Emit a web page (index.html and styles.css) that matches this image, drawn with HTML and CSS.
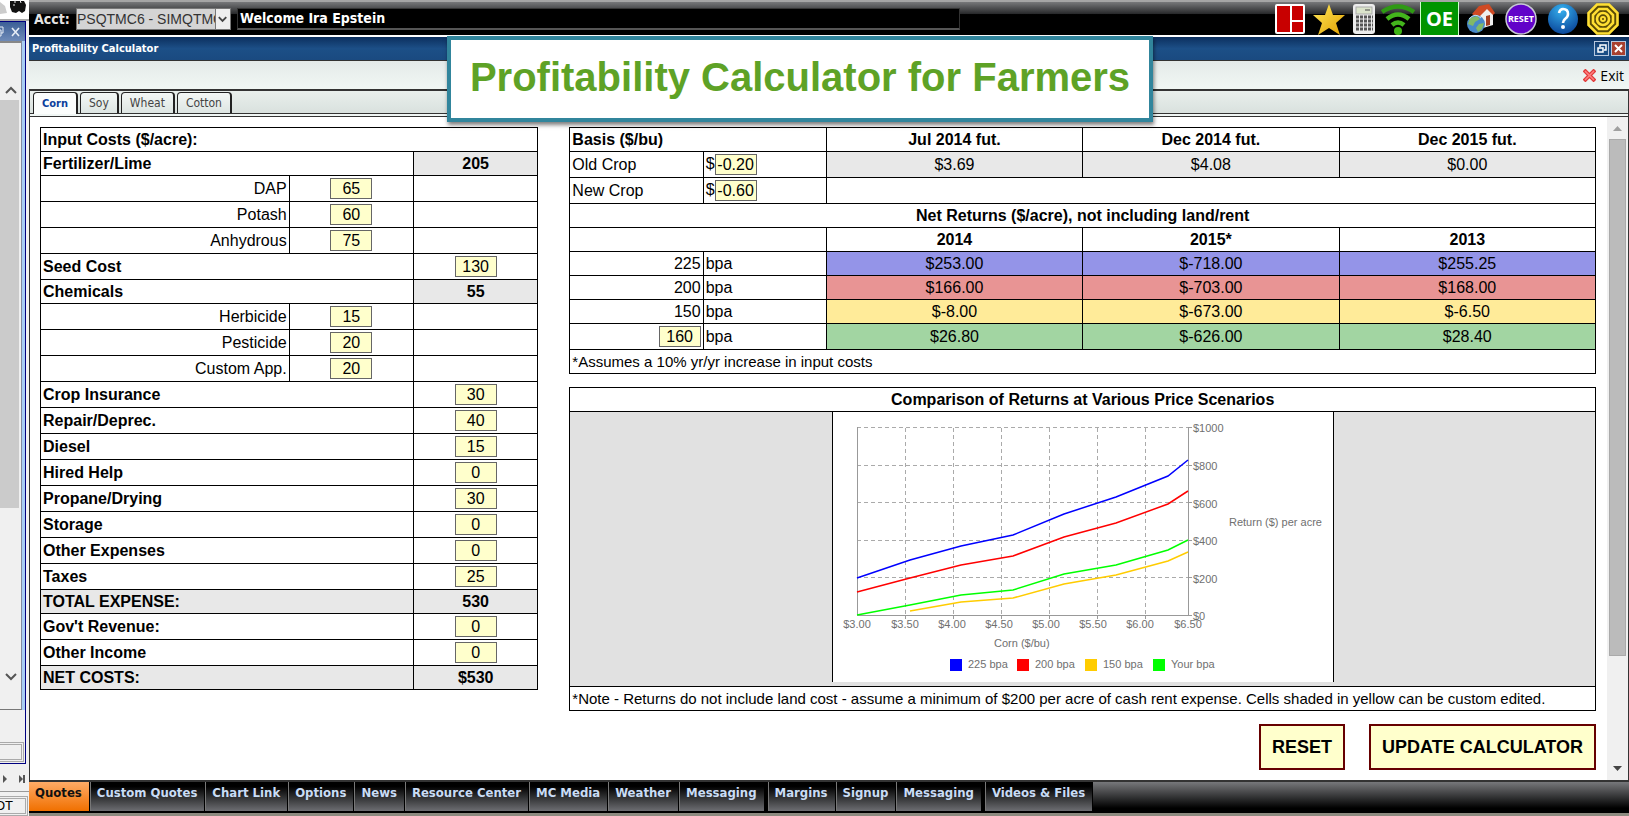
FILE: index.html
```
<!DOCTYPE html>
<html lang="en">
<head>
<meta charset="utf-8">
<title>Profitability Calculator</title>
<link rel="stylesheet" href="styles.css">
</head>
<body>
<div class="desktop">
  <aside class="side">
    <div class="side-top"><svg width="29" height="20" viewBox="0 0 29 20"><path d="M0 2l5 4 2 7-7 1z" fill="#ccc"/><path d="M10 1h14l2 4-1 6-3 2-3-2-3 2-4-1-2-5z" fill="#111"/><path d="M15 0v3M20 0l1 3M13 5h2" stroke="#eee"/></svg></div>
    <div class="side-window">
      <div class="side-title"><svg width="24" height="16" viewBox="0 0 24 16" fill="none" stroke="#e8eef6"><path d="M-4 6h5v6h-5M-2 6V3h5v6H1"/><path d="M12 4l7 8M19 4l-7 8" stroke-width="1.6"/></svg></div>
      <div class="side-scroll">
        <svg width="12" height="8" viewBox="0 0 12 8" fill="none" stroke="#555" stroke-width="2"><path d="M1 7l5-5 5 5"/></svg>
        <div class="side-thumb"></div>
        <svg width="12" height="8" viewBox="0 0 12 8" fill="none" stroke="#555" stroke-width="2"><path d="M1 1l5 5 5-5"/></svg>
      </div>
      <div class="side-field"></div>
    </div>
    <div class="side-pager"><svg width="26" height="8" viewBox="0 0 26 8" fill="#555"><path d="M3 0l4 4-4 4zM19 0l4 4-4 4zM23 0h2v8h-2z"/></svg></div>
    <div class="side-status">OT</div>
  </aside>

  <div class="app">
    <header class="topbar">
      <label class="acct" for="acct">Acct:</label>
      <span class="picker">
        <select id="acct"><option>PSQTMC6 - SIMQTMC6</option></select>
        <svg width="15" height="20" viewBox="0 0 15 20"><path d="M3 8l4 4 4-4" fill="none" stroke="#444" stroke-width="2"/></svg>
      </span>
      <div class="welcome">Welcome Ira Epstein</div>
      <div class="tools">
        <button class="tool" aria-label="Layout"><svg width="30" height="30" viewBox="0 0 30 30"><rect width="30" height="30" rx="2" fill="#fff"/><path d="M2 2h13v26H2zM17 2h11v14H17zM17 18h11v10H17z" fill="#c80000"/></svg></button>
        <button class="tool" aria-label="Favorites"><svg width="37" height="32" viewBox="-2 0 37 32"><defs><linearGradient id="gold" x2="1" y2="1"><stop offset="0" stop-color="#ffe95c"/><stop offset="1" stop-color="#e2a000"/></linearGradient></defs><path d="M17 1l4 11 12 0-9 8 4 12-11-7-11 7 4-12-9-8h12z" fill="url(#gold)"/></svg></button>
        <button class="tool" aria-label="Calculator"><svg width="24" height="30" viewBox="0 0 24 30"><rect x="1" width="22" height="30" rx="3" fill="#ececec"/><rect x="4" y="3" width="16" height="7" fill="#dbe4cb" stroke="#aaa"/><path d="M13 6h5" stroke="#444"/><path d="M4 13h17M4 17h17M4 21h17M4 25h17" stroke="#555" stroke-width="3" stroke-dasharray="3 1"/></svg></button>
        <button class="tool" aria-label="Connection"><svg width="34" height="32" viewBox="1 0 34 32" fill="none" stroke="#43b51c" stroke-width="4.500"><path d="M2 9q16-11 32 0" stroke="#2f9a14"/><path d="M7 16q11-9 22 0"/><path d="M12 22q6-5 12 0"/><circle cx="18" cy="28" r="4" fill="#3fb516" stroke="none"/></svg></button>
        <button class="tool oe">OE</button>
        <button class="tool roomy" aria-label="Home"><svg width="30" height="30" viewBox="0 0 30 30"><path d="M11 12l7-9 9 5v13l-10 3-6-4z" fill="#eee"/><path d="M6 10l7-8 10-2 6 9-2 2-6-6-9 9z" fill="#cf4a24"/><path d="M20 12l4-1v10l-4 1z" fill="#a63d20"/><circle cx="10" cy="20" r="9" fill="#4889c9"/><path d="M4 14l7-2 3 3-5 3-2 4-5-2zM13 20l5-1-2 6-4 3-2-4z" fill="#82b966"/><path d="M3 15q6-7 12-1" stroke="#c4e0f3" fill="none"/></svg></button>
        <button class="tool roomy" aria-label="Reset"><svg width="32" height="32" viewBox="0 0 32 32"><circle cx="16" cy="16" r="15" fill="#6203c9" stroke="#c9c9d6" stroke-width="1.5"/><text x="16" y="19" class="reset-glyph">RESET</text></svg></button>
        <button class="tool roomiest" aria-label="Help"><svg width="30" height="30" viewBox="0 0 30 30"><defs><radialGradient id="orb" cx=".45" cy=".2" r=".9"><stop offset="0" stop-color="#35b0ee"/><stop offset="1" stop-color="#063a90"/></radialGradient></defs><circle cx="15" cy="15" r="15" fill="url(#orb)"/><path d="M11 9q1-4 4-4 5 0 5 5 0 3-3 5-2 2-2 4" fill="none" stroke="#fff" stroke-width="2.6"/><circle cx="15" cy="23" r="2" fill="#fff"/></svg></button>
        <button class="tool" aria-label="Target"><svg width="32" height="32" viewBox="0 0 32 32" fill="none" stroke="#ffdf33" stroke-width="2.6"><path d="M10 1.500h12L30.500 10v12L22 30.500H10L1.500 22V10z" fill="#5a4b06"/><path d="M12 6h8l6 6v8l-6 6h-8l-6-6v-8z"/><circle cx="16" cy="16" r="6"/><circle cx="16" cy="16" r="2" stroke-width="2"/></svg></button>
      </div>
    </header>

    <div class="titlebar">
      <h2>Profitability Calculator</h2>
      <div class="winbtns">
        <button class="winbtn" aria-label="Restore"><svg width="13" height="13" viewBox="0 0 13 13" fill="none" stroke="#fff" stroke-width="1.500"><path d="M3 6h5v4H3zM5 5V3h6v5H9"/></svg></button>
        <button class="winbtn close" aria-label="Close"><svg width="13" height="13" viewBox="0 0 13 13" stroke="#fff" stroke-width="2"><path d="M3 3l7 7M10 3l-7 7"/></svg></button>
      </div>
    </div>
    <div class="toolbar">
      <button class="exit"><svg width="13" height="13" viewBox="0 0 13 13" stroke="#e23a3a" stroke-width="4"><path d="M1 1l11 11M12 1L1 12"/><path d="M2 2l9 9M11 2l-9 9" stroke="#ff8080" stroke-width="1.500"/></svg>Exit</button>
    </div>
    <nav class="tabs">
      <button class="tab on">Corn</button><button class="tab">Soy</button><button class="tab">Wheat</button><button class="tab">Cotton</button>
    </nav>

    <div class="body">
      <main class="content">
        <table class="grid costs">
          <colgroup><col class="w50"><col class="w25"><col class="w25"></colgroup>
          <tr><th colspan="3">Input Costs ($/acre):</th></tr>
          <tr><th colspan="2">Fertilizer/Lime</th><td class="sum">205</td></tr>
          <tr class="in"><td class="sub"><label for="dap">DAP</label></td><td><input id="dap" value="65"></td><td></td></tr>
          <tr class="in"><td class="sub"><label for="pot">Potash</label></td><td><input id="pot" value="60"></td><td></td></tr>
          <tr class="in"><td class="sub"><label for="anh">Anhydrous</label></td><td><input id="anh" value="75"></td><td></td></tr>
          <tr class="in"><th colspan="2"><label for="seed">Seed Cost</label></th><td><input id="seed" value="130"></td></tr>
          <tr><th colspan="2">Chemicals</th><td class="sum">55</td></tr>
          <tr class="in"><td class="sub"><label for="her">Herbicide</label></td><td><input id="her" value="15"></td><td></td></tr>
          <tr class="in"><td class="sub"><label for="pes">Pesticide</label></td><td><input id="pes" value="20"></td><td></td></tr>
          <tr class="in"><td class="sub"><label for="cus">Custom App.</label></td><td><input id="cus" value="20"></td><td></td></tr>
          <tr class="in"><th colspan="2"><label for="crop">Crop Insurance</label></th><td><input id="crop" value="30"></td></tr>
          <tr class="in"><th colspan="2"><label for="rep">Repair/Deprec.</label></th><td><input id="rep" value="40"></td></tr>
          <tr class="in"><th colspan="2"><label for="die">Diesel</label></th><td><input id="die" value="15"></td></tr>
          <tr class="in"><th colspan="2"><label for="hir">Hired Help</label></th><td><input id="hir" value="0"></td></tr>
          <tr class="in"><th colspan="2"><label for="pro">Propane/Drying</label></th><td><input id="pro" value="30"></td></tr>
          <tr class="in"><th colspan="2"><label for="sto">Storage</label></th><td><input id="sto" value="0"></td></tr>
          <tr class="in"><th colspan="2"><label for="oth">Other Expenses</label></th><td><input id="oth" value="0"></td></tr>
          <tr class="in"><th colspan="2"><label for="tax">Taxes</label></th><td><input id="tax" value="25"></td></tr>
          <tr class="total"><th colspan="2">TOTAL EXPENSE:</th><td class="sum">530</td></tr>
          <tr class="in"><th colspan="2"><label for="gov">Gov't Revenue:</label></th><td><input id="gov" value="0"></td></tr>
          <tr class="in"><th colspan="2"><label for="inc">Other Income</label></th><td><input id="inc" value="0"></td></tr>
          <tr class="total"><th colspan="2">NET COSTS:</th><td class="sum">$530</td></tr>
        </table>

        <div class="results">
          <table class="grid returns">
            <colgroup><col class="w13"><col class="w12"><col class="w25"><col class="w25"><col class="w25"></colgroup>
            <tr><th colspan="2">Basis ($/bu)</th><th class="mid">Jul 2014 fut.</th><th class="mid">Dec 2014 fut.</th><th class="mid">Dec 2015 fut.</th></tr>
            <tr class="in"><td class="lead"><label for="old">Old Crop</label></td><td class="lead">$<input id="old" value="-0.20"></td><td class="grey">$3.69</td><td class="grey">$4.08</td><td class="grey">$0.00</td></tr>
            <tr class="in"><td class="lead"><label for="new">New Crop</label></td><td class="lead">$<input id="new" value="-0.60"></td><td colspan="3"></td></tr>
            <tr><th colspan="5" class="mid">Net Returns ($/acre), not including land/rent</th></tr>
            <tr><th colspan="2"></th><th class="mid">2014</th><th class="mid">2015*</th><th class="mid">2013</th></tr>
            <tr class="blue"><td class="sub">225</td><td class="lead">bpa</td><td>$253.00</td><td>$-718.00</td><td>$255.25</td></tr>
            <tr class="red"><td class="sub">200</td><td class="lead">bpa</td><td>$166.00</td><td>$-703.00</td><td>$168.00</td></tr>
            <tr class="yellow"><td class="sub">150</td><td class="lead">bpa</td><td>$-8.00</td><td>$-673.00</td><td>$-6.50</td></tr>
            <tr class="in green"><td class="sub"><input id="bpa" value="160"></td><td class="lead"><label for="bpa">bpa</label></td><td>$26.80</td><td>$-626.00</td><td>$28.40</td></tr>
            <tr><td colspan="5" class="lead remark">*Assumes a 10% yr/yr increase in input costs</td></tr>
          </table>

          <section class="compare">
            <h3>Comparison of Returns at Various Price Scenarios</h3>
            <div class="plot">
              <svg class="chart" width="500" height="270" viewBox="0 0 500 270">
                <g class="gridlines"><path d="M72.500 16v187M120.500 16v187M168.500 16v187M216.500 16v187M264.500 16v187M312.500 16v187M24 15.500h331M24 53.500h331M24 90.500h331M24 128.500h331M24 165.500h331"/></g>
                <path class="axis" d="M24.500 15v188.500h331V15M355 15.500h4M355 53.500h4M355 90.500h4M355 128.500h4M355 165.500h4M355 203.500h4M72.500 203v4M120.500 203v4M168.500 203v4M216.500 203v4M264.500 203v4M312.500 203v4"/>
                <g class="series">
                  <polyline stroke="#0000ff" points="24,166 77,148 128,134 180,123 231,102 283,85 335,64 355,48"/>
                  <polyline stroke="#ff0000" points="24,180 77,166 128,153 180,144 231,125 283,111 335,92 355,79"/>
                  <polyline stroke="#ffcc00" points="77,199 128,190 180,186 231,172 283,163 335,149 355,140"/>
                  <polyline stroke="#00ff00" points="24,203 77,193 128,183 180,178 231,162 283,153 335,138 355,128"/>
                </g>
                <g><text x="360" y="20">$1000</text><text x="360" y="58">$800</text><text x="360" y="96">$600</text><text x="360" y="133">$400</text><text x="360" y="171">$200</text><text x="360" y="208">$0</text><text x="396" y="114">Return ($) per acre</text><text x="161" y="235">Corn ($/bu)</text></g>
                <g class="xt"><text x="24" y="216">$3.00</text><text x="72" y="216">$3.50</text><text x="119" y="216">$4.00</text><text x="166" y="216">$4.50</text><text x="213" y="216">$5.00</text><text x="260" y="216">$5.50</text><text x="307" y="216">$6.00</text><text x="355" y="216">$6.50</text></g>
                <rect x="117" y="247" width="12" height="12" fill="#0000ff"/><text x="135" y="256">225 bpa</text>
                <rect x="184" y="247" width="12" height="12" fill="#ff0000"/><text x="202" y="256">200 bpa</text>
                <rect x="252" y="247" width="12" height="12" fill="#ffcc00"/><text x="270" y="256">150 bpa</text>
                <rect x="320" y="247" width="12" height="12" fill="#00ff00"/><text x="338" y="256">Your bpa</text>
              </svg>
            </div>
            <p class="note remark">*Note - Returns do not include land cost - assume a minimum of $200 per acre of cash rent expense. Cells shaded in yellow can be custom edited.</p>
          </section>

          <div class="actions"><button class="action">RESET</button><button class="action">UPDATE CALCULATOR</button></div>
        </div>
      </main>
      <div class="scrollbar">
        <svg width="9" height="5" viewBox="0 0 9 5"><path d="M0 5l4.500-5L9 5z" fill="#a0a0a0"/></svg>
        <div class="thumb"></div>
        <svg width="9" height="5" viewBox="0 0 9 5"><path d="M0 0l4.500 5L9 0z" fill="#444"/></svg>
      </div>
    </div>

    <nav class="menu">
      <a class="on" href="#">Quotes</a><a href="#">Custom Quotes</a><a href="#">Chart Link</a><a href="#">Options</a><a href="#">News</a><a href="#">Resource Center</a><a href="#">MC Media</a><a href="#">Weather</a><a class="wide" href="#">Messaging</a><a href="#">Margins</a><a href="#">Signup</a><a class="wide" href="#">Messaging</a><a href="#">Videos &amp; Files</a>
    </nav>
    <div class="taskbar"></div>
  </div>
  <h1 class="banner">Profitability Calculator for Farmers</h1>
</div>
</body>
</html>
```
FILE: styles.css
```
* { box-sizing: border-box; }
body { margin: 0; font: 16px/20px "Liberation Sans", Arial, sans-serif; color: #000; background: #fff; }
button { font: inherit; margin: 0; padding: 0; border: 0; background: none; }
svg { display: block; }
h1, h2, h3, p { margin: 0; }

.desktop { position: relative; display: flex; min-height: 100vh; }

.side { width: 29px; flex: none; display: flex; flex-direction: column; background: #f0f0f0; overflow: hidden; }
.side-top { height: 21px; background: #fff; border-bottom: 2px solid #a8a8a8; }
.side-window { flex: 1; display: flex; flex-direction: column; margin-right: 3px; border-right: 1px solid #000080; border-bottom: 1px solid #000080; border-top: 1px solid #000080; }
.side-title { height: 19px; padding-top: 2px; background: linear-gradient(#3c5f96, #6f8bb8); }
.side-scroll { flex: 1; display: flex; flex-direction: column; align-items: center; gap: 6px; margin-right: 3px; padding: 43px 0 28px; border-top: 2px solid #888; border-right: 1px solid #7f8aa0; border-bottom: 1px solid #777; box-shadow: 3px 0 #a9cdf3; }
.side-thumb { align-self: stretch; height: 408px; margin-right: 2px; background: #cbcbcb; }
.side-scroll svg:last-child { margin-top: auto; }
.side-field { height: 20px; margin: 32px 1px 1px 0; border: 3px double #aaa; border-left: 0; }
.side-pager { height: 28px; padding-top: 11px; border-bottom: 1px solid #999; }
.side-status { height: 20px; margin: 4px 1px 0 0; border: 3px double #aaa; border-left: 0; font-size: 13px; line-height: 14px; text-indent: -5px; }

.app { flex: 1; min-width: 0; display: flex; flex-direction: column; }
.topbar { height: 35px; display: flex; align-items: center; padding: 0 10px 0 5px; border-top: 2px solid #a5a5a5; background: linear-gradient(#77787a, #2a2b2d 35%, #000 38%, #000); }
.acct, .welcome, .titlebar, .menu { font-family: "DejaVu Sans Condensed", "Open Sans", sans-serif; font-weight: bold; }
.acct { width: 42px; color: #e4e4e4; font-size: 14px; }
.picker { width: 155px; height: 22px; display: flex; border: 1px solid #777; background: #d4d4d4; }
.picker select { flex: 1; min-width: 0; appearance: none; border: 0; border-radius: 0; padding: 0; background: none; color: #333; font: 14px/20px "Liberation Sans", Arial, sans-serif; }
.picker svg { background: #eee; border-left: 1px solid #777; }
.welcome { flex: 0 1 723px; height: 22px; margin-left: 6px; padding: 0 2px; border: 1px solid #333; border-bottom: 2px solid #555; background: #000; color: #fff; font-size: 14px; line-height: 19px; }
.tools { height: 33px; margin-left: auto; display: flex; align-items: center; gap: 5px; flex: none; }
.roomy { padding: 0 2px; }
.roomiest { padding: 0 4px; }
.oe { width: 39px; height: 33px; border: solid #cfc; border-width: 0 1px; background: #009500; color: #fff; font: bold 20px "Open Sans", sans-serif; }
.reset-glyph { font: bold 9px "Open Sans", sans-serif; fill: #fff; text-anchor: middle; }

.titlebar { height: 26px; padding: 0 3px; display: flex; align-items: center; justify-content: space-between; border-top: 2px solid #fff; border-bottom: 1px solid #333; background: linear-gradient(#0c2f5e, #1c4f87 50%, #1a4a80); color: #fff; }
.titlebar h2 { font-size: 11px; }
.winbtns { display: flex; gap: 2px; }
.winbtn { border: 1px solid #b8c8de; }
.close { background: #a8402f; }
.toolbar { height: 28px; padding-right: 5px; display: flex; justify-content: flex-end; background: linear-gradient(#e4eae9, #f1f7f4); }
.exit { display: flex; align-items: center; gap: 4px; font: 14px "Open Sans", sans-serif; }
.tabs { height: 28px; display: flex; gap: 2px; padding: 1px 3px 0; border: solid #333; border-width: 2px 1px 1px; background: linear-gradient(#e9efec, #d9e1de) 0 0 / 100% 22px no-repeat, linear-gradient(#333, #333) 0 22px / 100% 1px no-repeat, #f0f6f4; }
.tab { height: 21px; padding: 0 8px; border: 1px solid #222; border-right-width: 2px; border-bottom: 0; border-radius: 4px 4px 0 0; background: linear-gradient(#f3f7f5, #dde5e2); color: #444; font: 12px "DejaVu Sans Condensed", "DejaVu Sans", sans-serif; }
.tab.on { height: 22px; background: #fbfdfc; color: #0b3f9c; font-size: 11px; font-weight: bold; }

.body { flex: 1; display: flex; border: solid #333; border-width: 0 1px 2px; background: #fff; }
.content { flex: 1; min-width: 0; display: flex; align-items: flex-start; gap: 31px; padding: 10px 11px 8px 10px; }
.costs { flex: 498 1 0; }
.results { flex: 1028 1 0; min-width: 0; }
.content > .costs { width: 498px; }
.grid { border-collapse: collapse; table-layout: fixed; width: 100%; }
.grid th, .grid td { height: 24px; padding: 0 2px; border: 1px solid #000; text-align: center; }
.grid th { text-align: left; }
.grid .in td, .grid .in th { height: 26px; }
.grid .sub { text-align: right; padding-right: 2px; }
.grid .lead { text-align: left; }
.grid .mid { text-align: center; }
.grid input { width: 42px; height: 21px; padding: 0; border: 1px solid #666; border-radius: 0; background: #ffffcc; color: #000; font: inherit; text-align: center; vertical-align: middle; }
.w50 { width: 50%; } .w25 { width: 25%; } .w13 { width: 13%; } .w12 { width: 12%; }
.sum { font-weight: bold; }
.sum, .total, .grey { background: #e8e8e8; }
.blue td:nth-child(n+3) { background: #9494e8; }
.red td:nth-child(n+3) { background: #e89494; }
.yellow td:nth-child(n+3) { background: #ffeb99; }
.green td:nth-child(n+3) { background: #a2d5a2; }
.remark { font-size: 15px; }

.compare { margin-top: 13px; border: 1px solid #000; }
.compare h3 { height: 24px; border-bottom: 1px solid #000; font-size: 16px; line-height: 23px; text-align: center; }
.plot { height: 274px; background: #e1e1e1; }
.chart { box-sizing: content-box; margin: 0 auto; border: solid #000; border-width: 0 1px; background: #fff; font-size: 11px; fill: #707070; }
.xt { text-anchor: middle; }
.gridlines { fill: none; stroke: #aaa; stroke-dasharray: 4 3; }
.axis { fill: none; stroke: #999; }
.series { fill: none; stroke-width: 1.5; }
.note { border-top: 1px solid #000; padding: 0 2px; line-height: 23px; }
.actions { display: flex; justify-content: flex-end; gap: 24px; margin-top: 13px; }
.action { height: 46px; padding: 0 11px; border: 2px solid #600; background: #ffffcc; font-size: 18px; font-weight: bold; }

.scrollbar { width: 21px; flex: none; display: flex; flex-direction: column; align-items: center; gap: 8px; padding: 9px 2px; background: #f0f0f0; }
.thumb { align-self: stretch; height: 517px; border: 1px solid #aaa; background: #bbb; }
.scrollbar svg:last-child { margin-top: auto; }

.menu { height: 31px; display: flex; background: linear-gradient(#77787b, #000 90%); border-bottom: 2px solid #000; font-size: 13px; }
.menu a { padding: 0 7px 0 6px; border-right: 1px solid #000; border-left: 1px solid #777; background: linear-gradient(#000 15%, #6d6e72); color: #c9dcf5; line-height: 22px; text-decoration: none; white-space: nowrap; }
.menu .wide { border-right-width: 4px; }
.menu .on { border-left: 0; background: linear-gradient(#ffab66, #f07000); color: #111; }
.taskbar { height: 3px; background: #8d8b80; }

.banner { position: absolute; left: 447px; right: 476px; top: 36px; height: 86px; border: 4px solid #31859c; background: #fff; box-shadow: 1px 3px 4px rgba(0, 0, 0, .5); color: #5ea226; font-size: 40px; line-height: 74px; text-align: center; white-space: nowrap; }
```
